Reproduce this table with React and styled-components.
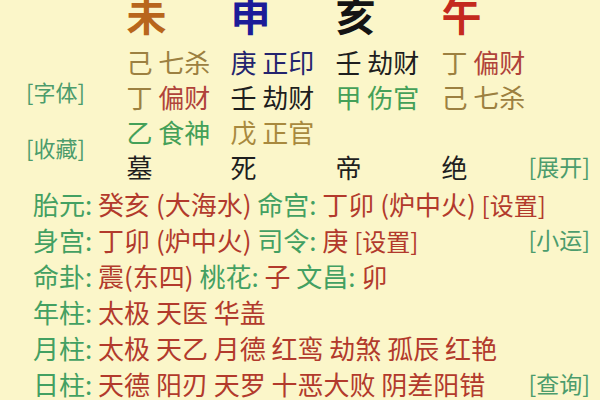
import React from 'react';
import styled, { createGlobalStyle } from 'styled-components';

const GlobalStyle = createGlobalStyle`
  html, body {
    margin: 0;
    padding: 0;
    background: #fbf6c9;
  }
  body {
    font-family: "Noto Sans CJK SC", "Noto Sans", sans-serif;
  }
`;

const c = {
  olive: '#9c8040',
  gold: '#a8893e',
  red: '#b0433a',
  navy: '#24246e',
  ink: '#1e1e1e',
  green: '#44a058',
  key: '#43a062',
  val: '#b23a2c',
  tag: '#4c9c6c'
};

const Page = styled.div`
  width: 600px;
  height: 400px;
  overflow: hidden;
  background: #fbf6c9;
`;

const Top = styled.div`
  display: flex;
  margin-top: -16px;
`;

const LabelCol = styled.div`
  width: 127px;
  display: flex;
  flex-direction: column;
  gap: 21px;
  padding: 90px 0 0 26px;
  box-sizing: border-box;
`;

const Tag = styled.span`
  font-size: ${(p) => p.size || 22}px;
  line-height: 35px;
  color: ${(p) => p.color || c.tag};
  white-space: nowrap;
`;

const PillarGrid = styled.div`
  flex: 1;
  display: grid;
  grid-template-columns: 104px 105px 106px 87px 1fr;
  grid-template-rows: 60px repeat(4, 35px);
`;

const Big = styled.div`
  font-size: 40px;
  font-weight: 700;
  line-height: 60px;
  color: ${(p) => p.color};
`;

const Cell = styled.div`
  font-size: 26px;
  line-height: 35px;
  white-space: nowrap;
`;

const RightCell = styled.div`
  display: flex;
  justify-content: flex-end;
  padding-right: 10px;
`;

const Part = styled.span`
  color: ${(p) => p.color};
`;

const Bottom = styled.div`
  padding: 1px 10px 0 33px;
  display: flex;
  flex-direction: column;
`;

const Line = styled.div`
  display: flex;
  align-items: center;
  justify-content: space-between;
  height: 36px;
  font-size: 26px;
  white-space: nowrap;
`;

const Key = styled.span`
  color: ${c.key};
`;

const Val = styled.span`
  color: ${c.val};
`;

const pillars = [
  {
    big: '未',
    color: '#b8661c',
    hidden: [
      [['己', c.olive], ['七杀', c.olive]],
      [['丁', c.olive], ['偏财', c.red]],
      [['乙', c.green], ['食神', c.green]]
    ],
    stage: '墓'
  },
  {
    big: '申',
    color: '#1c1c98',
    hidden: [
      [['庚', c.navy], ['正印', c.navy]],
      [['壬', c.ink], ['劫财', c.ink]],
      [['戊', c.gold], ['正官', c.gold]]
    ],
    stage: '死'
  },
  {
    big: '亥',
    color: '#141414',
    hidden: [
      [['壬', c.ink], ['劫财', c.ink]],
      [['甲', c.green], ['伤官', c.green]]
    ],
    stage: '帝'
  },
  {
    big: '午',
    color: '#c42a1e',
    hidden: [
      [['丁', c.olive], ['偏财', c.red]],
      [['己', c.olive], ['七杀', c.olive]]
    ],
    stage: '绝'
  }
];

// key/value segments for the lower lines
const lines = [
  {
    parts: [
      ['k', '胎元: '], ['v', '癸亥 (大海水) '], ['k', '命宫: '], ['v', '丁卯 (炉中火)  '], ['t', '[设置]']
    ]
  },
  {
    parts: [['k', '身宫: '], ['v', '丁卯 (炉中火) '], ['k', '司令: '], ['v', '庚  '], ['t', '[设置]']],
    right: '[小运]'
  },
  {
    parts: [['k', '命卦: '], ['v', '震(东四) '], ['k', '桃花: '], ['v', '子 '], ['k', '文昌: '], ['v', '卯']]
  },
  { parts: [['k', '年柱: '], ['v', '太极 天医 华盖']] },
  { parts: [['k', '月柱: '], ['v', '太极 天乙 月德 红鸾 劫煞 孤辰 红艳']] },
  {
    parts: [['k', '日柱: '], ['v', '天德 阳刃 天罗 十恶大败 阴差阳错']],
    right: '[查询]'
  }
];

function Segment({ kind, text }) {
  if (kind === 'k') return <Key>{text}</Key>;
  if (kind === 't') return <Tag size={24} color={c.val}>{text}</Tag>;
  return <Val>{text}</Val>;
}

export default function App() {
  return (
    <Page>
      <GlobalStyle />
      <Top>
        <LabelCol>
          <Tag>[字体]</Tag>
          <Tag>[收藏]</Tag>
        </LabelCol>
        <PillarGrid>
          {pillars.map((p) => (
            <Big key={p.big} color={p.color}>
              {p.big}
            </Big>
          ))}
          <div />
          {[0, 1, 2].map((row) => (
            <React.Fragment key={row}>
              {pillars.map((p, i) => {
                const h = p.hidden[row];
                return (
                  <Cell key={i}>
                    {h && (
                      <>
                        <Part color={h[0][1]}>{h[0][0]}</Part>{' '}
                        <Part color={h[1][1]}>{h[1][0]}</Part>
                      </>
                    )}
                  </Cell>
                );
              })}
              <div />
            </React.Fragment>
          ))}
          {pillars.map((p) => (
            <Cell key={p.stage}>
              <Part color={c.ink}>{p.stage}</Part>
            </Cell>
          ))}
          <RightCell>
            <Tag size={23}>[展开]</Tag>
          </RightCell>
        </PillarGrid>
      </Top>
      <Bottom>
        {lines.map((l, i) => (
          <Line key={i}>
            <span>
              {l.parts.map(([kind, text], j) => (
                <Segment key={j} kind={kind} text={text} />
              ))}
            </span>
            {l.right && <Tag size={23}>{l.right}</Tag>}
          </Line>
        ))}
      </Bottom>
    </Page>
  );
}
